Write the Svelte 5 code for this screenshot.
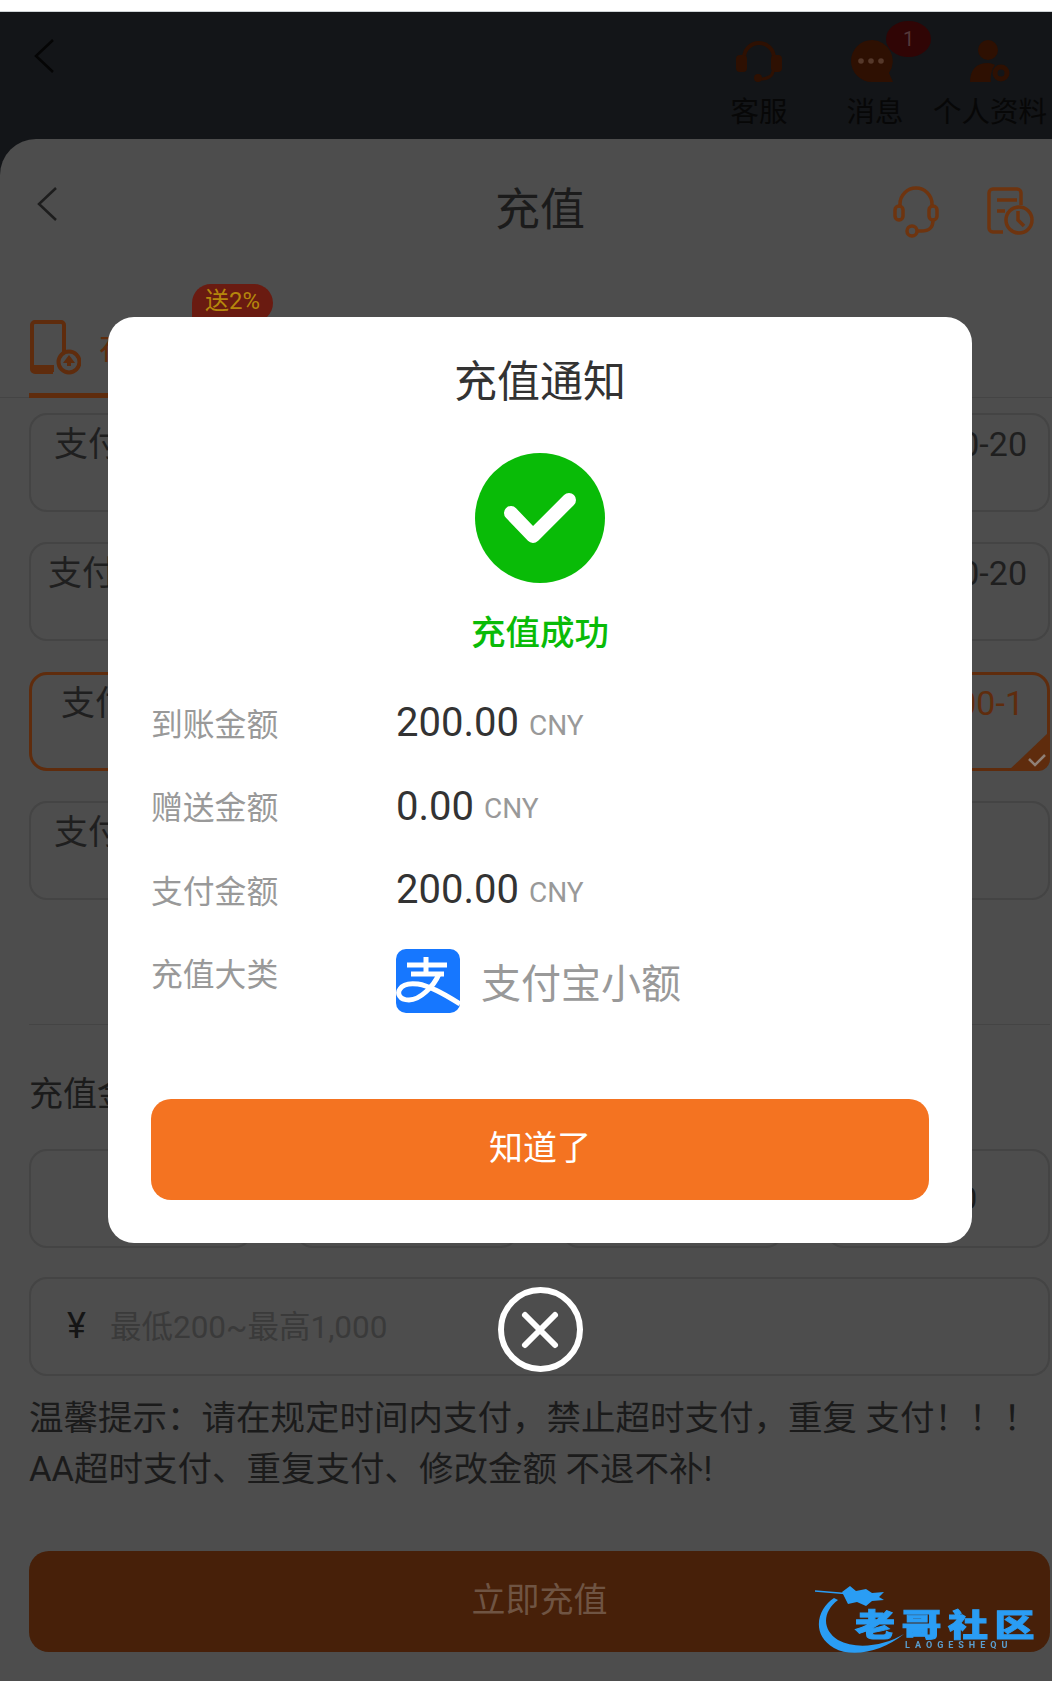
<script lang="ts">
	// everything behind the dialog uses the already-dimmed colours
	const payRows = [
		{ name: '支付', range: '100-20', pad: 'pad-a', active: false },
		{ name: '支付', range: '100-20', pad: 'pad-b', active: false },
		{ name: '支付', range: '100-1', pad: 'pad-c', active: true },
		{ name: '支付', range: '', pad: 'pad-a', active: false },
	];
	const amounts = ['200', '500', '800', '1,000'];
	const details = [
		{ label: '到账金额', value: '200.00' },
		{ label: '赠送金额', value: '0.00' },
		{ label: '支付金额', value: '200.00' },
	];
</script>

<div class="page">
	<div class="status-strip"></div>

	<header class="topbar">
		<svg class="back top-back" viewBox="0 0 22 36"><path d="M20 2 3 18l17 16" /></svg>
		<div class="top-actions">
			<div class="top-action act-service">
				<svg viewBox="0 0 48 42" width="48" height="42">
					<path d="M9 24V18a15 15 0 0 1 30 0v6" fill="none" stroke="#2e1002" stroke-width="4" />
					<rect x="1" y="15" width="11" height="17" rx="4" fill="#2e1002" />
					<rect x="36" y="15" width="11" height="17" rx="4" fill="#2e1002" />
					<path d="M38 31c0 5-6 8-12 8" fill="none" stroke="#2e1002" stroke-width="3" />
					<circle cx="23" cy="38" r="4" fill="#2e1002" />
				</svg>
				<span>客服</span>
			</div>
			<div class="top-action act-msg">
				<div class="msg-icon">
					<svg viewBox="0 0 42 42" width="42" height="42">
						<path d="M21 0a21 21 0 1 0 0 42h21l-4-9A21 21 0 0 0 21 0z" fill="#2e1002" />
						<circle cx="10" cy="21" r="2.8" fill="#55382a" />
						<circle cx="20" cy="21" r="2.8" fill="#55382a" />
						<circle cx="30" cy="21" r="2.8" fill="#55382a" />
					</svg>
					<b class="msg-badge">1</b>
				</div>
				<span>消息</span>
			</div>
			<div class="top-action act-user">
				<svg viewBox="0 0 44 42" width="44" height="42">
					<circle cx="20" cy="10" r="10" fill="#2e1002" />
					<path d="M2 42c0-12 6-19 18-19 3 0 5 1 7 2-3 4-5 10-4 17z" fill="#2e1002" />
					<circle cx="33" cy="33" r="6" fill="none" stroke="#2e1002" stroke-width="5" />
				</svg>
				<span>个人资料</span>
			</div>
		</div>
	</header>

	<section class="sheet">
		<div class="sheet-head">
			<svg class="back" viewBox="0 0 22 36"><path d="M20 2 3 18l17 16" /></svg>
			<h1>充值</h1>
			<div class="head-icons">
				<svg viewBox="0 0 48 52" width="48" height="52" fill="none" stroke="#6e340f" stroke-width="3.5">
					<path d="M8 20v-2a16 16 0 0 1 32 0v2" />
					<rect x="3" y="20" width="8" height="14" rx="4" />
					<rect x="37" y="20" width="8" height="14" rx="4" />
					<path d="M41 34c0 8-4 11-12 11h-5" />
					<circle cx="20" cy="45" r="5" />
				</svg>
				<svg viewBox="0 0 50 50" width="50" height="50" fill="none" stroke="#6e340f" stroke-width="3.5">
					<path d="M18 46H8a4 4 0 0 1-4-4V7a4 4 0 0 1 4-4h24a4 4 0 0 1 4 4v12" />
					<path d="M12 14h20M12 25h8" />
					<circle cx="34" cy="34" r="13" />
					<path d="M33 25v9l6 6" />
				</svg>
			</div>
		</div>

		<div class="tabs">
			<div class="tab">
				<span class="promo">送2%</span>
				<svg viewBox="0 0 52 56" width="52" height="56">
					<path d="M24 52H6a3 3 0 0 1-3-3V5a3 3 0 0 1 3-3h26a3 3 0 0 1 3 3v27" fill="none" stroke="#5f2c0d" stroke-width="4" />
					<path d="M3 45h22v7H6a3 3 0 0 1-3-3z" fill="#5f2c0d" />
					<circle cx="40" cy="42" r="10.5" fill="none" stroke="#5f2c0d" stroke-width="4" />
					<path d="M40 35l6 8h-4v3h-4v-3h-4z" fill="#5f2c0d" />
				</svg>
				<span class="tab-text">在线充值</span>
			</div>
		</div>

		<div class="pay-list">
			{#each payRows as row}
				<div class="pay-row {row.pad}" class:active={row.active}>
					<span>{row.name}</span>
					<span class="range">{row.range}</span>
					{#if row.active}
						<svg class="corner" viewBox="0 0 42 40" width="42" height="40">
							<path d="M42 0v28a12 12 0 0 1-12 12H0z" fill="#5f2c0d" />
							<path d="M21 28l6 6 10-10" fill="none" stroke="#8f8076" stroke-width="2.5" />
						</svg>
					{/if}
				</div>
			{/each}
		</div>

		<div class="divider"></div>

		<div class="amount-title">充值金额</div>
		<div class="amounts">
			{#each amounts as amt}
				<div class="amount">{amt}</div>
			{/each}
		</div>

		<div class="amount-input">
			<span class="yen">¥</span>
			<span class="placeholder">最低200~最高1,000</span>
		</div>

		<p class="notice">
			温馨提示&#xFF1A;请在规定时间内支付&#xFF0C;禁止超时支付&#xFF0C;重复 支付&#xFF01;&#xFF01;&#xFF01;<br />
			AA超时支付、重复支付、修改金额 不退不补!
		</p>

		<div class="submit">立即充值</div>
	</section>

	<div class="mask">
		<div class="dialog">
			<h2>充值通知</h2>
			<svg class="ok-icon" viewBox="0 0 130 130" width="130" height="130">
				<circle cx="65" cy="65" r="65" fill="#09bb07" />
				<path d="M36 60l22 23 36-36" fill="none" stroke="#fff" stroke-width="14" stroke-linecap="round" stroke-linejoin="round" />
			</svg>
			<div class="ok-text">充值成功</div>

			<div class="details">
				{#each details as d}
					<div class="detail">
						<span class="detail-label">{d.label}</span>
						<span class="detail-value">{d.value}</span>
						<span class="detail-unit">CNY</span>
					</div>
				{/each}
				<div class="detail detail-type">
					<span class="detail-label">充值大类</span>
					<svg class="ali-logo" viewBox="0 0 64 64" width="64" height="64">
						<rect width="64" height="64" rx="10" fill="#1677ff" />
						<g fill="none" stroke="#fff" stroke-width="5">
							<path d="M11 16h40M30 8v16M15 25h33" />
							<path d="M43 25C38 37 24 51 13 51 3 51 1 44 4 40c3-5 10-6 18-5 12 2 28 11 42 20" />
						</g>
					</svg>
					<span class="ali-name">支付宝小额</span>
				</div>
			</div>

			<button class="ok-btn">知道了</button>
		</div>

		<button class="close-btn" aria-label="关闭">
			<svg viewBox="0 0 40 40" width="40" height="40"><path d="M5 5l30 30M35 5 5 35" /></svg>
		</button>
	</div>

	<div class="watermark">
		<svg viewBox="0 0 120 80" width="120" height="80">
			<path d="M22 12C6 22-2 48 22 62c18 10 48 4 70-14-20 12-48 16-66 6C10 44 10 26 26 14z" fill="#2a9df4" />
			<path d="M3 5l36 3" fill="none" stroke="#2a9df4" stroke-width="1.5" />
			<path d="M30 6l8-6 6 5 10-2 6 4 12-1-5 5 5 3-12 1-6 5-9-4-9 2z" fill="#2a9df4" />
		</svg>
		<div class="wm-title">老哥社区</div>
		<div class="wm-sub">LAOGESHEQU</div>
	</div>
</div>

<style>
	:global(body) { margin: 0; background: #4d4d4d; }
	.page { position: relative; width: 1052px; height: 1681px; overflow: hidden; display: flex; flex-direction: column; font-family: Roboto, "Noto Sans CJK SC", sans-serif; color: #1b1b1b; background: #131518; }
	.status-strip { flex: 0 0 auto; height: 11px; background: #fff; border-bottom: 1px solid #cfd3d6; }

	/* top bar */
	.topbar { flex: 0 0 127px; background: #131518; display: flex; justify-content: space-between; align-items: flex-start; box-sizing: border-box; }
	.back { width: 22px; height: 36px; fill: none; stroke: #0a0a0a; stroke-width: 2.5; flex: 0 0 auto; }
	.top-back { margin: 26px 0 0 33px; stroke: #050505; }
	.top-actions { display: flex; padding-top: 28px; }
	.top-action { display: flex; flex-direction: column; align-items: center; font-size: 28.5px; line-height: 34px; color: #070707; gap: 14px; }
	.top-action svg { display: block; }
	.act-service { width: 58px; margin-right: 58px; }
	.act-msg { width: 58px; margin-right: 29px; }
	.act-user { width: 114px; margin-right: 5px; }
	.msg-icon { position: relative; width: 42px; height: 42px; margin-left: -6px; }
	.msg-badge { position: absolute; top: -19px; left: 35px; width: 45px; height: 36px; border-radius: 50%; background: #300505; color: #55393a; font-size: 20px; line-height: 36px; text-align: center; font-weight: 400; }

	/* sheet */
	.sheet { flex: 1; padding: 0 2px 0 29px; background: #4d4d4d; border-radius: 36px 0 0 0; }
	.sheet-head { display: flex; align-items: flex-start; height: 145px; padding-top: 47px; box-sizing: border-box; position: relative; }
	.sheet-head .back { margin-left: 6px; stroke: #1d1d1d; width: 24px; height: 36px; }
	.sheet-head h1 { position: absolute; left: 1px; right: 0; top: 42px; margin: 0; text-align: center; font-size: 45px; font-weight: 400; line-height: 60px; color: #1b1b1b; }
	.head-icons { margin-left: auto; display: flex; gap: 45px; margin-right: 15px; }

	/* tabs */
	.tabs { height: 114px; margin-right: -2px; margin-left: -29px; padding-left: 29px; box-sizing: border-box; border-bottom: 1px solid #444; }
	.tab { position: relative; width: 240px; height: 114px; box-sizing: border-box; padding-top: 36px; border-bottom: 5px solid #5f2c0d; display: flex; gap: 18px; }
	.promo { position: absolute; left: 163px; top: 0; width: 81px; height: 38px; border-radius: 19px 19px 19px 0; background: #6a1b11; color: #b5870c; font-size: 24px; line-height: 34px; text-align: center; }
	.tab-text { font-size: 32px; line-height: 56px; color: #5f2c0d; }

	/* pay options */
	.pay-list { display: flex; flex-direction: column; gap: 30.3px; padding-top: 15px; }
	.pay-row { position: relative; height: 99px; box-sizing: border-box; border: 2px solid #444; border-radius: 18px; display: flex; justify-content: space-between; padding-top: 6px; padding-right: 21px; font-size: 34px; line-height: 46px; color: #1f1f1f; }
	.pad-a { padding-left: 23px; }
	.pad-b { padding-left: 17px; }
	.pad-c { padding-left: 29px; }
	.active { border: 3px solid #5f2c0d; padding-top: 5px; padding-right: 23px; }
	.active .range { color: #5f2c0d; }
	.corner { position: absolute; right: -3px; bottom: -3px; }

	.divider { height: 1px; background: #444; margin: 124px 0 0; }
	.amount-title { font-size: 34px; line-height: 46px; margin-top: 46px; color: #1b1b1b; }
	.amounts { display: grid; grid-template-columns: repeat(4, 1fr); gap: 42px; margin-top: 32px; }
	.amount { height: 99px; box-sizing: border-box; border: 2px solid #444; border-radius: 18px; text-align: center; font-size: 32px; line-height: 95px; color: #1b1b1b; }

	.amount-input { height: 99px; box-sizing: border-box; margin-top: 29px; border: 2px solid #444; border-radius: 18px; display: flex; align-items: center; padding-left: 36px; gap: 24px; font-size: 31.5px; }
	.yen { color: #151515; font-size: 36px; }
	.placeholder { color: #3a3a3a; padding-bottom: 5px; }

	.notice { margin: 17px 0 0; font-size: 34.5px; line-height: 51px; color: #1b1b1b; white-space: nowrap; }

	.submit { margin-top: 56px; height: 101px; border-radius: 20px; background: #472009; color: #6f5443; text-align: center; font-size: 34px; line-height: 98px; }

	/* dialog */
	.mask { position: absolute; inset: 0; padding: 317px 0 0 28px; box-sizing: border-box; display: flex; flex-direction: column; align-items: center; }
	.dialog { width: 864px; height: 926px; flex: 0 0 auto; box-sizing: border-box; background: #fff; border-radius: 26px; padding: 37px 43px 0; display: flex; flex-direction: column; color: #333; }
	.dialog h2 { margin: 0; text-align: center; font-size: 43px; font-weight: 400; line-height: 56px; color: #333; }
	.ok-icon { display: block; flex: 0 0 auto; margin: 43px auto 0; }
	.ok-text { margin-top: 27px; text-align: center; font-size: 34.5px; line-height: 46px; font-weight: 500; color: #09bb07; }

	.details { margin-top: 25px; display: flex; flex-direction: column; height: 418px; flex: 0 0 auto; }
	.detail { display: flex; align-items: center; height: 83.5px; flex: 0 0 auto; }
	.detail-label { width: 245px; flex: 0 0 auto; font-size: 31.8px; color: #999; padding-bottom: 2px; }
	.detail-value { font-size: 40px; color: #333; }
	.detail-unit { font-size: 28px; color: #999; margin-left: 10px; padding-top: 5px; }
	.detail-type { align-items: flex-start; height: 90px; padding-top: 17.5px; }
	.detail-type .detail-label { line-height: 44px; margin-top: 4px; padding-bottom: 0; }
	.ali-logo { display: block; flex: 0 0 auto; }
	.ali-name { font-size: 40px; color: #999; margin-left: 21px; line-height: 72px; }

	.ok-btn { display: block; flex: 0 0 auto; width: 778px; height: 101px; margin: 0 auto; padding: 0 0 9px; border: none; border-radius: 20px; background: #f47321; color: #fff; font: inherit; font-size: 34px; cursor: pointer; }

	.close-btn { flex: 0 0 auto; margin-top: 44px; width: 85px; height: 85px; box-sizing: border-box; border: 6px solid #fff; border-radius: 50%; background: transparent; padding: 0; display: flex; align-items: center; justify-content: center; }
	.close-btn svg { fill: none; stroke: #fff; stroke-width: 6; stroke-linecap: round; }

	/* watermark */
	.watermark { position: absolute; left: 812px; top: 1586px; width: 230px; height: 80px; color: #2a9df4; filter: blur(.4px); }
	.watermark svg { position: absolute; left: 0; top: 0; overflow: visible; }
	.wm-title { position: absolute; left: 43px; top: 21px; font-size: 40px; line-height: 40px; font-weight: 900; letter-spacing: 6.5px; white-space: nowrap; font-family: "Noto Sans CJK SC", sans-serif; -webkit-text-stroke: 1.2px #2a9df4; transform: scaleY(.78); transform-origin: top left; }
	.wm-sub { position: absolute; left: 93px; top: 54px; font-size: 9px; line-height: 11px; letter-spacing: 5px; color: #5a9fd0; font-weight: 700; white-space: nowrap; }
</style>
